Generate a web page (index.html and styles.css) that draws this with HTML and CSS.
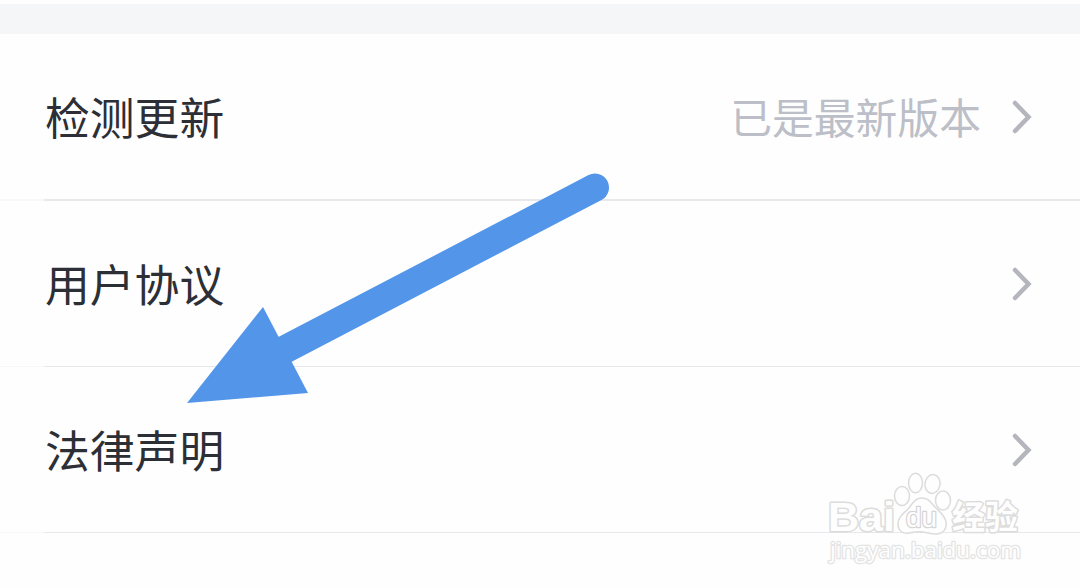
FILE: index.html
```html
<!DOCTYPE html>
<html lang="zh-CN">
<head>
    <meta charset="UTF-8">
    <meta name="viewport" content="width=device-width, initial-scale=1.0">
    <title>设置</title>
    <link rel="stylesheet" href="styles.css">
</head>
<body>
    <div class="section-gap"></div>

    <div class="list">
        <div class="row row-first">
            <span class="label">检测更新</span>
            <span class="value">已是最新版本</span>
            <svg class="chevron" viewBox="0 0 20 34"><path d="M3 3 L16.500 17 L3 31"/></svg>
        </div>
        <div class="row">
            <span class="label">用户协议</span>
            <svg class="chevron" viewBox="0 0 20 34"><path d="M3 3 L16.500 17 L3 31"/></svg>
        </div>
        <div class="row">
            <span class="label">法律声明</span>
            <svg class="chevron" viewBox="0 0 20 34"><path d="M3 3 L16.500 17 L3 31"/></svg>
        </div>
    </div>

    <!-- watermark -->
    <svg class="watermark" viewBox="0 0 210 110">
        <text class="brand" x="13" y="66" textLength="67" lengthAdjust="spacingAndGlyphs">Bai</text>
        <ellipse cx="87" cy="31" rx="7.500" ry="9.500"/>
        <ellipse cx="100.500" cy="18" rx="7" ry="9.700"/>
        <ellipse cx="117.500" cy="19" rx="7.500" ry="9.500" transform="rotate(10 117.500 19)"/>
        <ellipse cx="128" cy="35.500" rx="7.500" ry="9.500"/>
        <path d="M107 33 C99 33 97 40 93 44 C88 49 83 52 83 59 C83 66 88 69 94 68 C100 67 103 66 108 67 C114 68 117 69.500 122 69 C129 68 132 64 131 57 C130 51 126 48 121 43 C116 38 114 33 107 33Z"/>
        <text class="du" x="91" y="62" textLength="31" lengthAdjust="spacingAndGlyphs">du</text>
        <text class="cn" x="137" y="64" textLength="66" lengthAdjust="spacingAndGlyphs">经验</text>
        <text class="site" x="15" y="92.500" textLength="191" lengthAdjust="spacingAndGlyphs">jingyan.baidu.com</text>
    </svg>

    <!-- pointer arrow -->
    <svg class="arrow" viewBox="0 0 1080 588">
        <path class="shaft" d="M595 187.500 L280 352"/>
        <path class="head" d="M187 403 L263 307 L308 393Z"/>
    </svg>
</body>
</html>
```
FILE: styles.css
```css
* { box-sizing: border-box; }

body {
    margin: 0;
    padding-top: 4px;
    height: 588px;
    position: relative;
    overflow: hidden;
    background: #fefefe;
    font-family: "Noto Sans CJK SC", sans-serif;
}

.section-gap {
    height: 30px;
    background: #f5f6f8;
}

.row {
    display: flex;
    align-items: center;
    height: 166px;
    padding: 0 48px 0 45px;
    border-bottom: 1px solid;
    border-image: linear-gradient(to right, #f7f7f7 45px, #e8e8ea 45px) 1;
}

.row-first {
    height: 167px;
    border-bottom-width: 2px;
}

.label {
    flex: 1;
    padding-bottom: 2px;
    font-size: 44.8px;
    line-height: 60px;
    color: #2d2f36;
}

.value {
    margin-right: 31px;
    padding-bottom: 2px;
    font-size: 41.8px;
    line-height: 60px;
    color: #bcbfc7;
}

.chevron {
    width: 20px;
    height: 34px;
    fill: none;
    stroke: #b4b5bd;
    stroke-width: 4.5;
    stroke-linecap: round;
    stroke-linejoin: miter;
}

.arrow {
    position: absolute;
    top: 0;
    left: 0;
    width: 1080px;
    height: 588px;
}

.shaft {
    fill: none;
    stroke: #5295e9;
    stroke-width: 28;
    stroke-linecap: round;
}

.head { fill: #5295e9; }

.watermark {
    position: absolute;
    left: 815px;
    top: 465px;
    width: 210px;
    height: 110px;
    fill: #fefefe;
    stroke: #dcdcdc;
    stroke-width: 1.5;
}

.watermark text {
    font-family: "Open Sans", "Noto Sans CJK SC", sans-serif;
    paint-order: stroke;
    stroke-linejoin: round;
}

.watermark .brand {
    font-family: "Liberation Sans", sans-serif;
    font-size: 41px;
    font-weight: bold;
    stroke-width: 3;
}

.watermark .du {
    font-family: "Liberation Sans", sans-serif;
    font-size: 28px;
    stroke: #d4d4d4;
    stroke-width: 2.5;
}

.watermark .cn {
    font-family: "Noto Sans CJK SC", sans-serif;
    font-size: 33px;
    font-weight: 700;
    stroke-width: 3;
}

.watermark .site {
    font-size: 21px;
    stroke: #e4e4e4;
    stroke-width: 2.5;
}
```
